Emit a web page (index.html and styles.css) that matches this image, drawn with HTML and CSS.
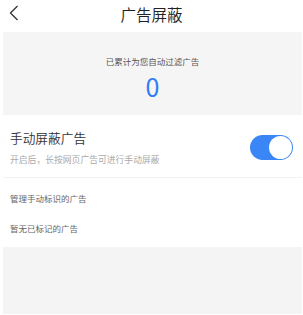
FILE: index.html
```html
<!DOCTYPE html>
<html lang="zh-CN">

<head>
    <meta charset="UTF-8">
    <meta name="viewport" content="width=device-width, initial-scale=1.0">
    <title>广告屏蔽</title>
    <link rel="stylesheet" href="styles.css">
</head>

<body>
    <div class="topbar">
        <svg class="back" width="10" height="16" viewBox="0 0 10 16">
            <path d="M8.5 1 L1.5 8 L8.5 15" fill="none" stroke="#333" stroke-width="1.3" />
        </svg>
        <h1 class="title">广告屏蔽</h1>
    </div>

    <div class="total">
        <p class="totalText">已累计为您自动过滤广告</p>
        <p class="totalNum">0</p>
    </div>

    <div class="switchRow">
        <div class="switchText">
            <p class="switchTitle">手动屏蔽广告</p>
            <p class="switchSub">开启后，长按网页广告可进行手动屏蔽</p>
        </div>
        <div class="toggle on"><span class="knob"></span></div>
    </div>

    <div class="list">
        <p class="listItem">管理手动标识的广告</p>
        <p class="listItem">暂无已标记的广告</p>
    </div>

    <div class="empty"></div>
</body>

</html>
```

FILE: styles.css
```css
body {
    margin: 0;
    background-color: #ffffff;
    font-family: "Noto Sans CJK SC", "Noto Sans", sans-serif;
    overflow: hidden;
}

p {
    margin: 0;
}

/* topp */
.topbar {
    height: 32px;
    position: relative;
    display: flex;
    justify-content: center;
    align-items: center;
}

.back {
    position: absolute;
    left: 9px;
    top: 5px;
}

.title {
    margin: 0 0 4px 0;
    font-size: 15.5px;
    font-weight: 350;
    color: #222;
    line-height: 20px;
}

/* teller */
.total {
    margin: 0 1px 0 3px;
    height: 83px;
    background-color: #f5f5f5;
    display: flex;
    flex-direction: column;
    align-items: center;
    padding-top: 23px;
    box-sizing: border-box;
}

.totalText {
    font-size: 8.5px;
    line-height: 12px;
    color: #555;
}

.totalNum {
    margin-top: 5px;
    font-size: 25px;
    line-height: 28px;
    color: #2f7cf6;
}

/* bryter */
.switchRow {
    margin: 0 1px 0 3px;
    padding: 14px 9px 11px 7px;
    display: flex;
    justify-content: space-between;
    align-items: center;
    border-bottom: 1px solid #f2f2f2;
}

.switchTitle {
    font-size: 12.7px;
    font-weight: 350;
    line-height: 18px;
    color: #333;
}

.switchSub {
    margin-top: 6px;
    font-size: 8.8px;
    line-height: 13px;
    color: #aaa;
}

.toggle {
    width: 43px;
    height: 25px;
    border-radius: 13px;
    background-color: #3b86f7;
    display: flex;
    align-items: center;
    justify-content: flex-end;
    padding: 0 1px;
    box-sizing: border-box;
}

.knob {
    width: 23px;
    height: 23px;
    border-radius: 50%;
    background-color: #fff;
}

/* liste */
.list {
    margin: 5px 0 4px 0;
    padding-left: 10px;
}

.listItem {
    font-size: 8.5px;
    line-height: 30px;
    color: #666;
}

.empty {
    margin: 0 1px 0 3px;
    height: 67px;
    background-color: #f4f4f4;
}
```
